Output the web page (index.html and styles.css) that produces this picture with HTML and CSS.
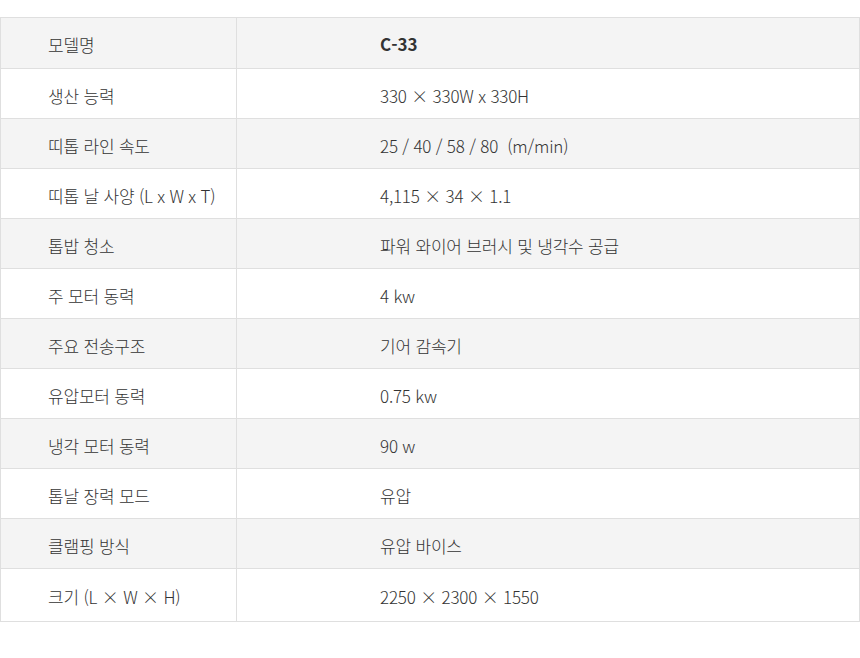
FILE: index.html
```html
<!DOCTYPE html>
<html lang="ko">
<head>
<meta charset="utf-8">
<link rel="stylesheet" href="styles.css">
</head>
<body>
<table class="spec">
  <tbody>
    <tr class="alt first"><th>모델명</th><td class="model">C-33</td></tr>
    <tr><th>생산 능력</th><td>330 × 330W x 330H</td></tr>
    <tr class="alt"><th>띠톱 라인 속도</th><td>25 / 40 / 58 / 80&nbsp; (m/min)</td></tr>
    <tr><th>띠톱 날 사양 (L x W x T)</th><td>4,115 × 34 × 1.1</td></tr>
    <tr class="alt"><th>톱밥 청소</th><td>파워 와이어 브러시 및 냉각수 공급</td></tr>
    <tr><th>주 모터 동력</th><td>4 kw</td></tr>
    <tr class="alt"><th>주요 전송구조</th><td>기어 감속기</td></tr>
    <tr><th>유압모터 동력</th><td>0.75 kw</td></tr>
    <tr class="alt"><th>냉각 모터 동력</th><td>90 w</td></tr>
    <tr><th>톱날 장력 모드</th><td>유압</td></tr>
    <tr class="alt"><th>클램핑 방식</th><td>유압 바이스</td></tr>
    <tr class="last"><th>크기 (L × W × H)</th><td>2250 × 2300 × 1550</td></tr>
  </tbody>
</table>
</body>
</html>
```
FILE: styles.css
```css
html, body {
  margin: 0;
  padding: 0;
  background: #fff;
}
body {
  padding-top: 17px;
  font-family: "Noto Sans CJK KR", "Noto Sans", sans-serif;
  color: #333;
}
.spec {
  width: 860px;
  border-collapse: collapse;
  table-layout: fixed;
}
.spec th,
.spec td {
  height: 50px;
  border: 1px solid #dfdfdf;
  font-size: 17px;
  font-weight: 300;
  text-align: left;
  vertical-align: middle;
  letter-spacing: -0.2px;
  padding-top: 3px;
  padding-bottom: 0;
  box-sizing: border-box;
}
.spec th {
  width: 236px;
  padding-left: 47px;
}
.spec td {
  padding-left: 143px;
}
.spec tr.alt th,
.spec tr.alt td {
  background: #f4f4f4;
}
.spec td.model {
  font-weight: 700;
  letter-spacing: 0;
  padding-top: 0;
}
.spec tr.first th,
.spec tr.first td {
  height: 51px;
}
.spec tr.last th,
.spec tr.last td {
  height: 53px;
}
```
